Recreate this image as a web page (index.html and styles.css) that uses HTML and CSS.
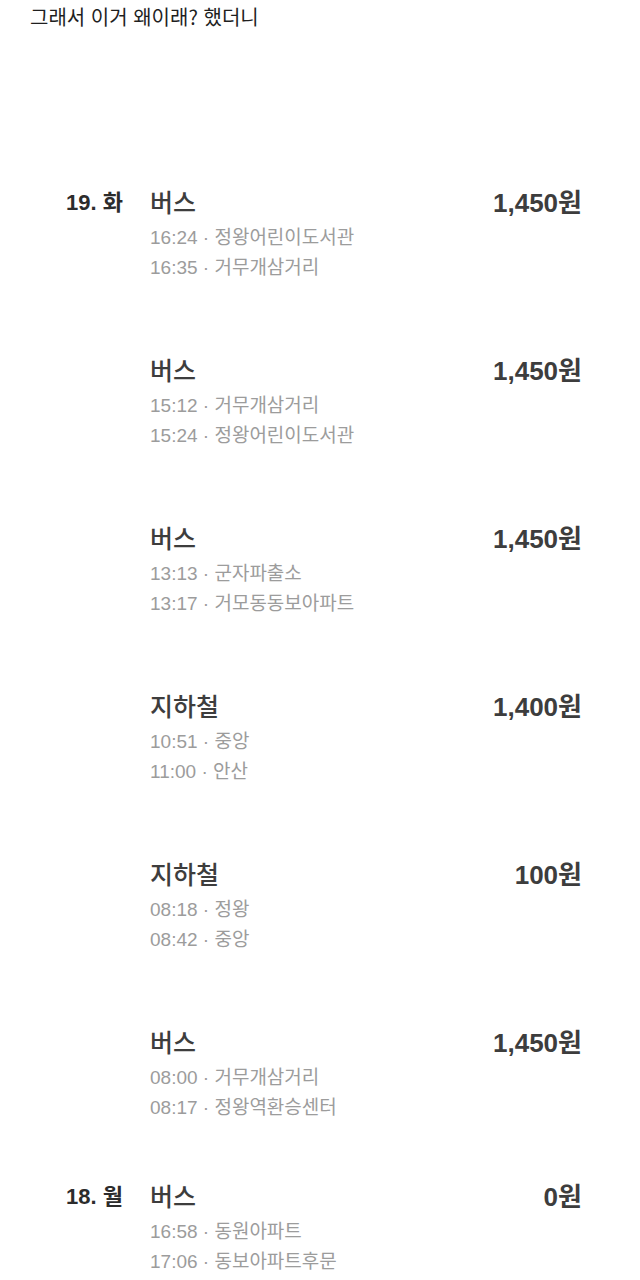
FILE: index.html
```html
<!DOCTYPE html>
<html lang="ko">
<head>
    <meta charset="UTF-8">
    <meta name="viewport" content="width=device-width, initial-scale=1.0">
    <title>이용 내역</title>
    <link rel="stylesheet" href="styles.css">
</head>
<body>
    <p class="caption">그래서 이거 왜이래? 했더니</p>

    <div class="history">
        <div class="ride">
            <div class="day">19. 화</div>
            <div class="detail">
                <div class="kind">버스</div>
                <div class="stop">16:24 · 정왕어린이도서관</div>
                <div class="stop">16:35 · 거무개삼거리</div>
            </div>
            <div class="fare">1,450원</div>
        </div>

        <div class="ride">
            <div class="day"></div>
            <div class="detail">
                <div class="kind">버스</div>
                <div class="stop">15:12 · 거무개삼거리</div>
                <div class="stop">15:24 · 정왕어린이도서관</div>
            </div>
            <div class="fare">1,450원</div>
        </div>

        <div class="ride">
            <div class="day"></div>
            <div class="detail">
                <div class="kind">버스</div>
                <div class="stop">13:13 · 군자파출소</div>
                <div class="stop">13:17 · 거모동동보아파트</div>
            </div>
            <div class="fare">1,450원</div>
        </div>

        <div class="ride">
            <div class="day"></div>
            <div class="detail">
                <div class="kind">지하철</div>
                <div class="stop">10:51 · 중앙</div>
                <div class="stop">11:00 · 안산</div>
            </div>
            <div class="fare">1,400원</div>
        </div>

        <div class="ride">
            <div class="day"></div>
            <div class="detail">
                <div class="kind">지하철</div>
                <div class="stop">08:18 · 정왕</div>
                <div class="stop">08:42 · 중앙</div>
            </div>
            <div class="fare">100원</div>
        </div>

        <div class="ride">
            <div class="day"></div>
            <div class="detail">
                <div class="kind">버스</div>
                <div class="stop">08:00 · 거무개삼거리</div>
                <div class="stop">08:17 · 정왕역환승센터</div>
            </div>
            <div class="fare">1,450원</div>
        </div>

        <div class="ride new-day">
            <div class="day">18. 월</div>
            <div class="detail">
                <div class="kind">버스</div>
                <div class="stop">16:58 · 동원아파트</div>
                <div class="stop">17:06 · 동보아파트후문</div>
            </div>
            <div class="fare">0원</div>
        </div>
    </div>
</body>
</html>
```

FILE: styles.css
```css
:root {
    --text-dark: #2c2c2c;
    --text-main: #3d3d3d;
    --text-sub: #9c9c9c;
}

* {
    box-sizing: border-box;
    margin: 0;
    padding: 0;
}

body {
    font-family: "Liberation Sans", "Noto Sans CJK KR", sans-serif;
    background-color: #ffffff;
    color: var(--text-dark);
}

.caption {
    padding-left: 30px;
    font-family: "Noto Sans CJK KR", sans-serif;
    font-size: 20px;
    line-height: 34px;
    color: #1f1f1f;
}

.history {
    margin-top: 151px;
    padding: 0 58px 0 66px;
}

.ride {
    display: flex;
    align-items: flex-start;
    margin-bottom: 70px;
}

.ride:last-child {
    margin-bottom: 0;
}

.ride.new-day {
    margin-top: -14px;
}

.day {
    width: 84px;
    flex-shrink: 0;
    font-size: 22px;
    font-weight: 700;
    line-height: 36px;
    color: var(--text-dark);
}

.detail {
    flex: 1;
}

.kind {
    font-size: 25px;
    font-weight: 500;
    line-height: 36px;
    margin-bottom: 2px;
    color: var(--text-main);
}

.stop {
    font-size: 19px;
    line-height: 30px;
    color: var(--text-sub);
}

.fare {
    font-size: 26px;
    font-weight: 700;
    line-height: 36px;
    color: var(--text-main);
}
```
